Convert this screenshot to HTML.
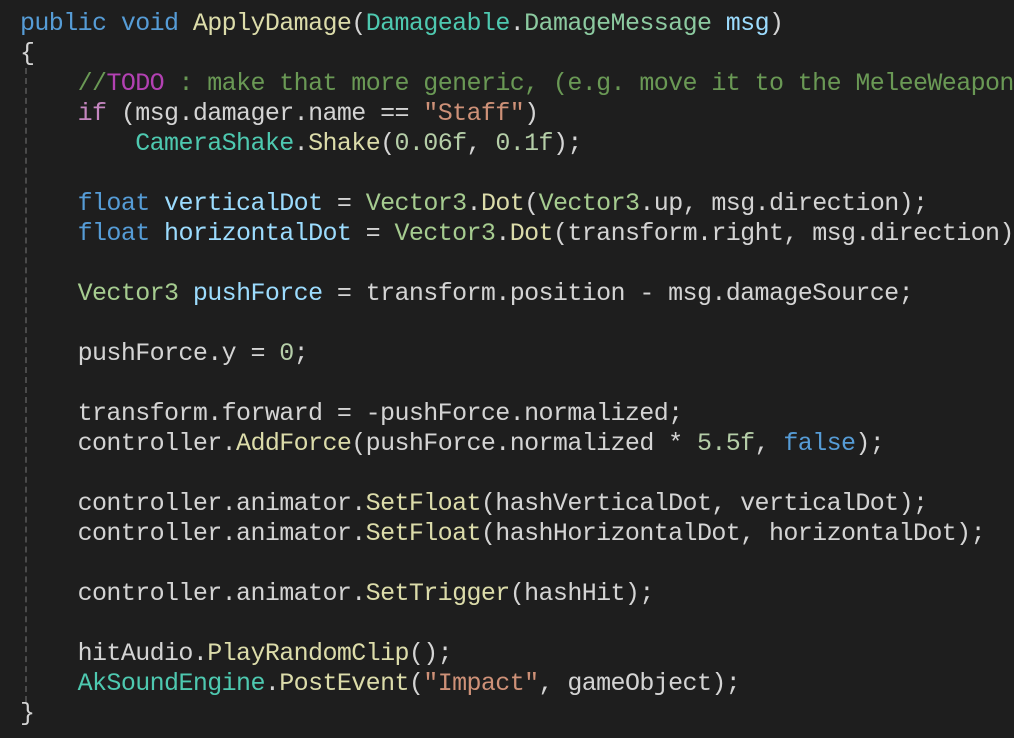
<!DOCTYPE html>
<html><head><meta charset="utf-8"><style>
html,body{margin:0;padding:0;background:#1e1e1e;width:1014px;height:738px;overflow:hidden}
pre{margin:0;position:absolute;left:20px;top:9px;font-family:"Liberation Mono",monospace;font-size:25px;letter-spacing:-0.6px;line-height:30px;color:#d4d4d4;white-space:pre}
.guide{position:absolute;left:25px;top:68px;width:0;height:634px;border-left:2px dashed #4a4a4a}
.k{color:#569cd6}.f{color:#dcdcaa}.t{color:#4ec9b0}.g{color:#8ccaa0}.v{color:#9cdcfe}.c{color:#6a9955}.todo{color:#b341b3}.p{color:#c586c0}.s{color:#ce9178}.n{color:#b5cea8}.vc{color:#a6cc90}
</style></head><body>
<div class="guide"></div>
<pre><span class="k">public</span> <span class="k">void</span> <span class="f">ApplyDamage</span>(<span class="t">Damageable</span>.<span class="g">DamageMessage</span> <span class="v">msg</span>)
{
    <span class="c">//</span><span class="todo">TODO</span><span class="c"> : make that more generic, (e.g. move it to the MeleeWeapon</span>
    <span class="p">if</span> (msg.damager.name == <span class="s">"Staff"</span>)
        <span class="t">CameraShake</span>.<span class="f">Shake</span>(<span class="n">0.06f</span>, <span class="n">0.1f</span>);

    <span class="k">float</span> <span class="v">verticalDot</span> = <span class="vc">Vector3</span>.<span class="f">Dot</span>(<span class="vc">Vector3</span>.up, msg.direction);
    <span class="k">float</span> <span class="v">horizontalDot</span> = <span class="vc">Vector3</span>.<span class="f">Dot</span>(transform.right, msg.direction);

    <span class="vc">Vector3</span> <span class="v">pushForce</span> = transform.position - msg.damageSource;

    pushForce.y = <span class="n">0</span>;

    transform.forward = -pushForce.normalized;
    controller.<span class="f">AddForce</span>(pushForce.normalized * <span class="n">5.5f</span>, <span class="k">false</span>);

    controller.animator.<span class="f">SetFloat</span>(hashVerticalDot, verticalDot);
    controller.animator.<span class="f">SetFloat</span>(hashHorizontalDot, horizontalDot);

    controller.animator.<span class="f">SetTrigger</span>(hashHit);

    hitAudio.<span class="f">PlayRandomClip</span>();
    <span class="t">AkSoundEngine</span>.<span class="f">PostEvent</span>(<span class="s">"Impact"</span>, gameObject);
}</pre>
</body></html>
